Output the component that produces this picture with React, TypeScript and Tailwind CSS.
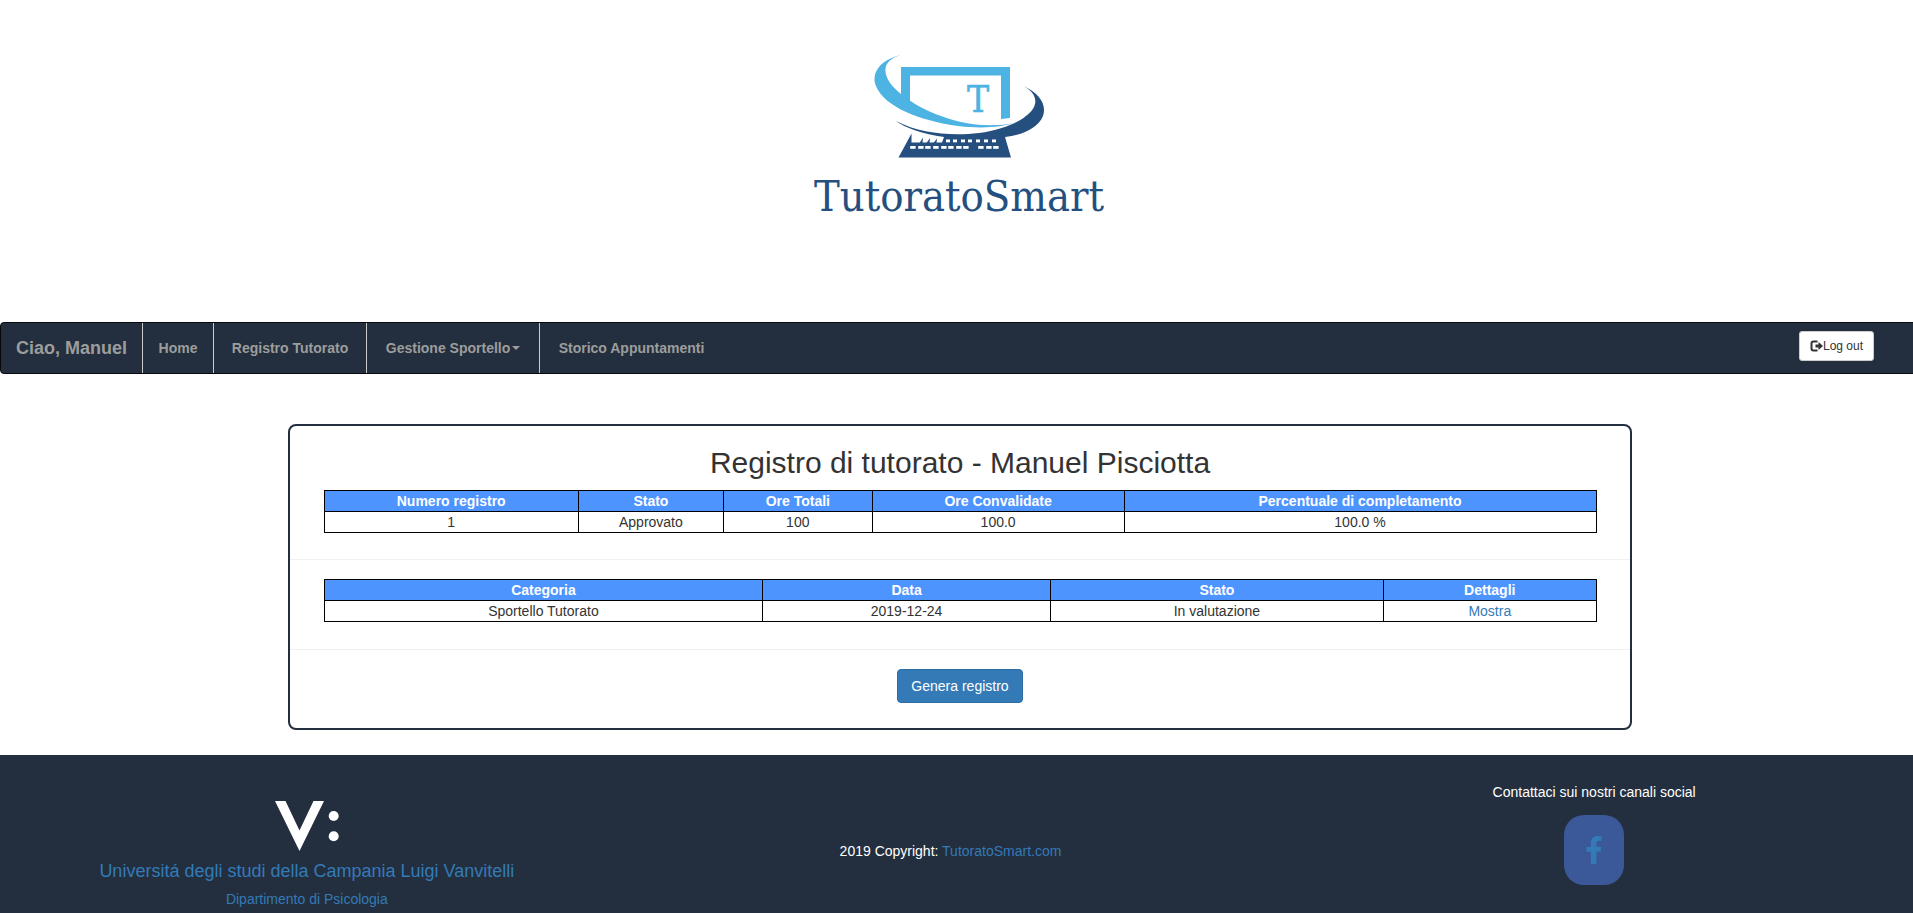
import React from "react";
import { FaFacebookF } from "react-icons/fa";

const registerColumns = [
  { title: "Numero registro", value: "1", width: "w-[20%]" },
  { title: "Stato", value: "Approvato", width: "w-[11.4%]" },
  { title: "Ore Totali", value: "100", width: "w-[11.7%]" },
  { title: "Ore Convalidate", value: "100.0", width: "w-[19.8%]" },
  { title: "Percentuale di completamento", value: "100.0 %", width: "w-[37.1%]" },
];

const activityColumns = [
  { title: "Categoria", width: "w-[34.5%]" },
  { title: "Data", width: "w-[22.6%]" },
  { title: "Stato", width: "w-[26.2%]" },
  { title: "Dettagli", width: "w-[16.7%]" },
];

const upperKeys = [948, 955, 963, 970, 978, 986, 994];
const lowerKeys = [913, 921, 928, 936, 944, 951, 959, 966, 981, 989, 996];

function Logo() {
  return (
    <svg viewBox="790 30 340 210" className="block h-[210px] w-[340px]" role="img" aria-label="TutoratoSmart">
      <g fill="#4cb3e2">
        <path d="M901 67H1010V118L1001 119V75.500H910V103L901 97Z" />
        <path d="M901 55C879 60 871 74 876 86C884 107 921 121 958 126C983 129 1001 127 1014 123C1000 126 982 126 966 123C934 117 903 100 890 83C882 70 884 60 901 55Z" />
      </g>
      <g fill="#254f7e">
        <path d="M896 121C921 134 952 136 979 133C1011 129 1033 115 1035 104C1037 96 1030 89 1023 86C1039 93 1047 104 1043 116C1038 128 1023 135 1005 137L1011 157.500H898.500L911.500 133.500V142.500H942L944 137C923 134 905 128 896 121Z" />
        <path d="M919.500 143L923 137.500L922.500 143ZM926.500 143L930 138L929.500 143ZM933.500 143L937 138.500L936.500 143Z" />
      </g>
      <g fill="#fff">
        {upperKeys.map((x) => (
          <rect key={x} x={x - 2} y={139.5} width={4} height={2.8} />
        ))}
        {lowerKeys.map((x) => (
          <rect key={x} x={x - 2.8} y={146} width={5.4} height={2.8} />
        ))}
      </g>
      <text x="978" y="112" textAnchor="middle" fill="#4cb3e2" stroke="#4cb3e2" strokeWidth="0.5" className="font-['DejaVu_Serif_Condensed','DejaVu_Serif',serif] text-[37px]">T</text>
      <text x="959" y="211" textAnchor="middle" fill="#254f7e" className="font-['DejaVu_Serif_Condensed','DejaVu_Serif',serif] text-[43px]">TutoratoSmart</text>
    </svg>
  );
}

function LogoutIcon() {
  return (
    <svg viewBox="0 0 13 12" className="h-3 w-[13px]" aria-hidden="true">
      <path d="M7.500 1.500H3.500Q1.500 1.500 1.500 3.500V8.500Q1.500 10.500 3.500 10.500H7.500" fill="none" stroke="#333" strokeWidth="2" />
      <path d="M5.500 4.500H8.500V2L13 6L8.500 10V7.500H5.500Z" fill="#333" />
    </svg>
  );
}

export default function App() {
  return (
    <div className="flex min-h-screen flex-col overflow-x-hidden bg-white font-['Liberation_Sans',Arial,sans-serif] text-sm leading-5 text-[#333]">
      <div className="-mr-[7px] flex grow flex-col">
        <header className="flex h-[322px] justify-center pt-[30px]">
          <Logo />
        </header>

        <nav className="flex h-[52px] items-stretch rounded border border-[#080808] bg-[#232f3e] font-bold text-[#9d9d9d]">
          <a href="#" className="flex items-center border-r border-[#ccc] px-[15px] text-lg">Ciao, Manuel</a>
          <a href="#" className="flex min-w-[71px] items-center justify-center border-r border-[#ccc]">Home</a>
          <a href="#" className="flex min-w-[153px] items-center justify-center border-r border-[#ccc]">Registro Tutorato</a>
          <a href="#" className="flex min-w-[173px] items-center justify-center border-r border-[#ccc]">
            Gestione Sportello
            <span className="ml-0.5 border-x-4 border-t-4 border-x-transparent border-t-[#9d9d9d]" />
          </a>
          <a href="#" className="flex min-w-[183px] items-center justify-center">Storico Appuntamenti</a>
          <button type="button" className="mt-2 mr-[45px] ml-auto flex h-[30px] min-w-[75px] items-center justify-center rounded-[3px] border border-[#ccc] bg-white text-xs font-normal text-[#333]">
            <LogoutIcon />
            Log out
          </button>
        </nav>

        <main className="mt-[50px] mb-[25px] ml-[15%] w-[70%] rounded-lg border-2 border-[#232f3e] pb-[25px]">
          <section className="border-b border-[#f1f1f1] pt-5 pb-[26px]">
            <h2 className="mb-2.5 text-center text-3xl leading-[34px]">Registro di tutorato - Manuel Pisciotta</h2>
            <table className="mx-auto w-[95%] table-fixed border-collapse text-center">
              <thead>
                <tr>
                  {registerColumns.map((c) => (
                    <th key={c.title} className={`${c.width} border border-black bg-[#4d94ff] p-0 text-white`}>{c.title}</th>
                  ))}
                </tr>
              </thead>
              <tbody>
                <tr>
                  {registerColumns.map((c) => (
                    <td key={c.title} className="border border-black p-0">{c.value}</td>
                  ))}
                </tr>
              </tbody>
            </table>
          </section>

          <section className="border-b border-[#f1f1f1] pt-[19px] pb-[27px]">
            <table className="mx-auto w-[95%] table-fixed border-collapse text-center">
              <thead>
                <tr>
                  {activityColumns.map((c) => (
                    <th key={c.title} className={`${c.width} border border-black bg-[#4d94ff] p-0 text-white`}>{c.title}</th>
                  ))}
                </tr>
              </thead>
              <tbody>
                <tr>
                  <td className="border border-black p-0">Sportello Tutorato</td>
                  <td className="border border-black p-0">2019-12-24</td>
                  <td className="border border-black p-0">In valutazione</td>
                  <td className="border border-black p-0"><a href="#" className="text-[#337ab7]">Mostra</a></td>
                </tr>
              </tbody>
            </table>
          </section>

          <div className="flex justify-center pt-[19px]">
            <button type="button" className="h-[34px] min-w-[126px] rounded border border-[#2e6da4] bg-[#337ab7] px-3 text-white">Genera registro</button>
          </div>
        </main>

        <footer className="grow bg-[#232f3e] text-white">
          <div className="mr-1 -ml-[15px] grid grid-cols-3 text-center">
            <div className="flex flex-col items-center pt-[46px] text-[#337ab7]">
              <svg viewBox="275 801 64 50" className="h-[50px] w-16" role="img" aria-label="Vanvitelli">
                <path d="M275 801H285.500L299.500 830.500L313.500 801H324L299.500 851Z" fill="#fff" />
                <circle cx="333.700" cy="816" r="5" fill="#fff" />
                <circle cx="333.700" cy="836.300" r="5" fill="#fff" />
              </svg>
              <a href="#" className="mt-2.5 text-lg leading-5">Universitá degli studi della Campania Luigi Vanvitelli</a>
              <a href="#" className="mt-2">Dipartimento di Psicologia</a>
            </div>
            <p className="pt-[86px]">2019 Copyright: <a href="#" className="text-[#337ab7]">TutoratoSmart.com</a></p>
            <div className="flex flex-col items-center pt-[27px]">
              <p>Contattaci sui nostri canali social</p>
              <a href="#" aria-label="Facebook" className="mt-[13px] flex h-[70px] w-[60px] items-center justify-center rounded-[20px] bg-[#3b5998] text-[#337ab7]">
                <FaFacebookF className="h-7 w-7" />
              </a>
            </div>
          </div>
        </footer>
      </div>
    </div>
  );
}
